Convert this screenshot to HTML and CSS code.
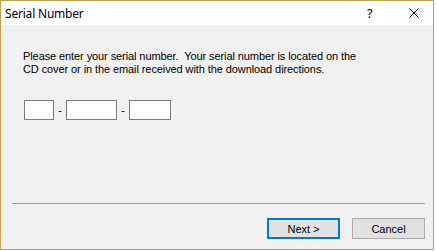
FILE: index.html
```html
<!DOCTYPE html>
<html>
<head>
<meta charset="utf-8">
<link rel="stylesheet" href="styles.css">
</head>
<body>
<div class="window">
  <div class="titlebar">
    <span class="title">Serial Number</span>
    <span class="help">?</span>
    <span class="close"><svg width="10" height="10" viewBox="0 0 10 10"><path d="M0.5 0.5L9.5 9.5M9.5 0.5L0.5 9.5" stroke="#000" stroke-width="1"/></svg></span>
  </div>
  <div class="content">
    <p class="msg">Please enter your serial number.&nbsp; Your serial number is located on the<br>CD cover or in the email received with the download directions.</p>
    <div class="serial">
      <span class="box w1"></span><span class="dash">-</span><span class="box w2"></span><span class="dash">-</span><span class="box w3"></span>
    </div>
    <div class="grow"></div>
    <div class="sep"></div>
    <div class="buttons">
      <button class="btn primary">Next &gt;</button>
      <button class="btn">Cancel</button>
    </div>
  </div>
</div>
</body>
</html>
```
FILE: styles.css
```css
html, body { margin: 0; padding: 0; background: #ffffff; }
.window {
  width: 434px;
  height: 250px;
  box-sizing: border-box;
  border: 1px solid #c4a04a;
  display: flex;
  flex-direction: column;
  background: #f0f0f0;
}
.titlebar {
  height: 24px;
  background: #ffffff;
  display: flex;
  align-items: center;
  font-family: "Noto Sans", sans-serif;
  font-size: 12px;
  color: #000;
}
.title { margin-left: 4px; flex: 1; letter-spacing: -0.2px; }
.help { width: 10px; margin-right: 32px; font-size: 13px; }
.close { width: 10px; height: 10px; margin-right: 14px; display: flex; }
.content {
  flex: 1;
  display: flex;
  flex-direction: column;
  padding: 0 8px 10px 11px;
  font-family: "Liberation Sans", Arial, sans-serif;
  font-size: 11px;
  color: #000;
}
.msg { margin: 25px 0 0 11px; line-height: 13px; letter-spacing: -0.09px; }
.serial { display: flex; align-items: center; margin: 24px 0 0 12px; }
.box { height: 20px; box-sizing: border-box; border: 1px solid #7a7a7a; background: #fff; display: block; }
.w1 { width: 30px; }
.w2 { width: 51px; }
.w3 { width: 42px; }
.dash { width: 12px; text-align: center; }
.grow { flex: 1; }
.sep { height: 1px; background: #a0a0a0; }
.buttons { display: flex; justify-content: flex-end; gap: 12px; margin-top: 14px; }
.btn {
  width: 73px;
  height: 21px;
  box-sizing: border-box;
  border: 1px solid #adadad;
  background: #e1e1e1;
  font-family: "Liberation Sans", Arial, sans-serif;
  font-size: 11px;
  color: #000;
  padding: 0;
}
.primary { border: 2px solid #0078d7; }
```
